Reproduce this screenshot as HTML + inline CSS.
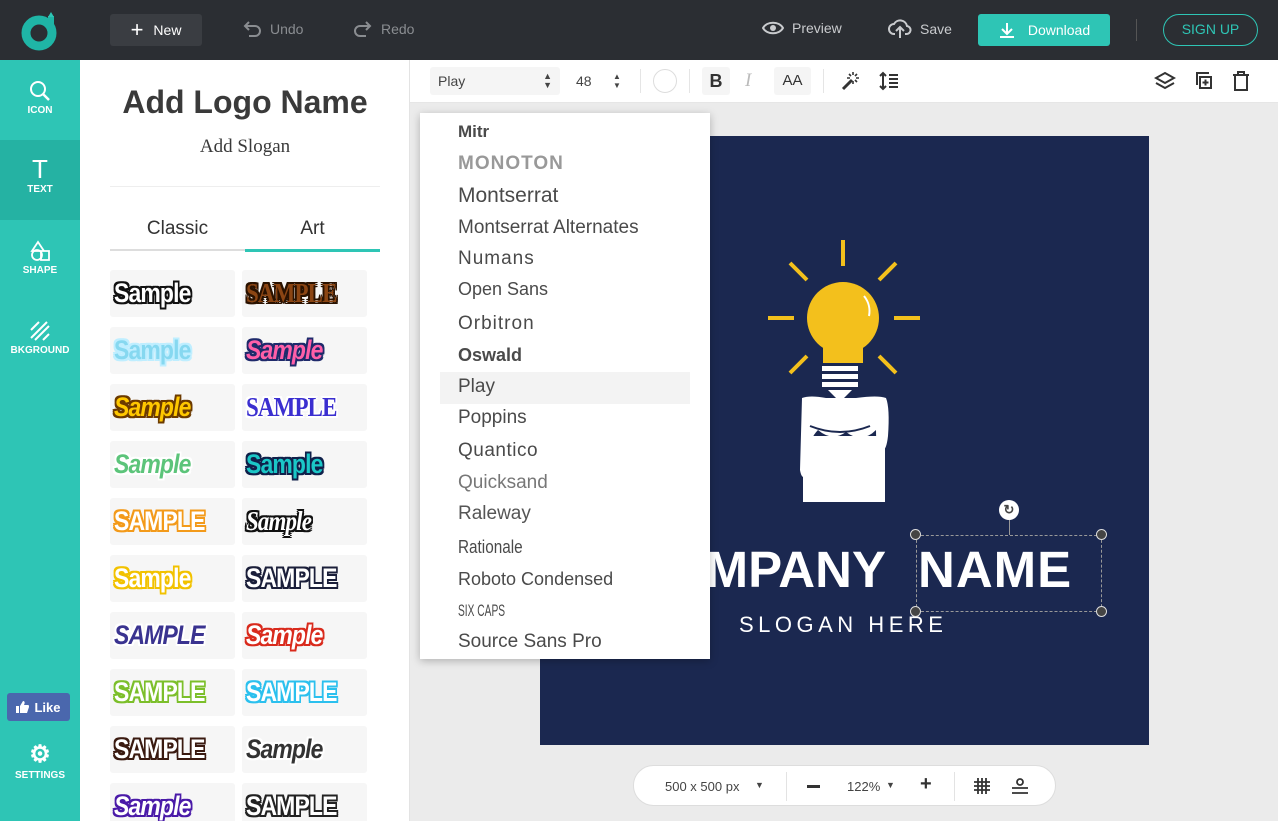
<!DOCTYPE html>
<html><head><meta charset="utf-8"><style>
*{box-sizing:border-box;margin:0;padding:0}
html,body{width:1278px;height:821px;overflow:hidden}
body{font-family:"Liberation Sans",sans-serif;background:#ebebeb;position:relative}
.abs{position:absolute}
.top{left:0;top:0;width:1278px;height:60px;background:#2b2e33}
.tb{color:#8a8d91;font-size:14px;display:flex;align-items:center;gap:8px}
.side{left:0;top:60px;width:80px;height:761px;background:#2ec5b5}
.si{position:absolute;left:0;width:80px;height:80px;color:#fff;font-size:10px;font-weight:bold;text-align:center}
.panel{left:80px;top:60px;width:330px;height:761px;background:#fff;border-right:1px solid #e3e3e3}
.tile{position:absolute;width:125px;height:47px;background:#f6f6f6;border-radius:3px;overflow:hidden;display:flex;align-items:center;font-size:27px;font-weight:bold;white-space:nowrap}
.tool{left:410px;top:60px;width:868px;height:43px;background:#fff;border-bottom:1px solid #e6e6e6}
.dd{left:420px;top:113px;width:290px;height:546px;background:#fff;box-shadow:0 2px 8px rgba(0,0,0,.25);overflow:hidden}
.fi{position:absolute;left:38px;font-size:19px;color:#4a4a4a;white-space:nowrap}
.h{position:absolute;width:11px;height:11px;border-radius:50%;background:#444;border:1.5px solid #ddd}
</style></head><body>
<div class="abs top"></div>
<svg class="abs" style="left:20px;top:10px" width="42" height="42" viewBox="0 0 42 42"><circle cx="19" cy="23" r="13" fill="none" stroke="#1fb5a6" stroke-width="9"/><path d="M28 6 L34 6 L34 25 L28 25Z" fill="#1fb5a6"/><path d="M31 2 l3 5 h-6z" fill="#2ec5b5"/></svg>
<div class="abs" style="left:110px;top:14px;width:92px;height:32px;background:#3a3d42;border-radius:3px;color:#fff;font-size:14px;display:flex;align-items:center;justify-content:center;gap:10px"><span style="font-size:22px;font-weight:300">+</span>New</div>
<div class="abs tb" style="left:242px;top:20px"><svg width="20" height="18"><path d="M4 6h9a5 5 0 0 1 0 10H7M7 2L3 6l4 4" fill="none" stroke="#8a8d91" stroke-width="2"/></svg>Undo</div>
<div class="abs tb" style="left:353px;top:20px"><svg width="20" height="18"><path d="M16 6H7a5 5 0 0 0 0 10h6M13 2l4 4-4 4" fill="none" stroke="#8a8d91" stroke-width="2"/></svg>Redo</div>
<div class="abs tb" style="left:762px;top:20px;color:#c9cbce"><svg width="22" height="16"><path d="M1 8C5 1 17 1 21 8C17 15 5 15 1 8Z" fill="none" stroke="#c9cbce" stroke-width="2"/><circle cx="11" cy="8" r="3" fill="#c9cbce"/></svg>Preview</div>
<div class="abs tb" style="left:888px;top:18px;color:#c9cbce"><svg width="24" height="22"><path d="M7 16H6a5 5 0 0 1 0-10a7 7 0 0 1 13 2a4 4 0 0 1-1 8h-1M12 20V10M8 13l4-4 4 4" fill="none" stroke="#c9cbce" stroke-width="2"/></svg>Save</div>
<div class="abs" style="left:978px;top:14px;width:132px;height:32px;background:#2ec5b5;border-radius:3px;color:#fff;font-size:14px;display:flex;align-items:center;justify-content:center;gap:12px"><svg width="18" height="18"><path d="M9 2v11M4 8l5 5 5-5M2 16h14" fill="none" stroke="#fff" stroke-width="2"/></svg>Download</div>
<div class="abs" style="left:1136px;top:19px;width:1px;height:22px;background:#555"></div>
<div class="abs" style="left:1163px;top:14px;width:95px;height:32px;border:1.5px solid #2ec5b5;border-radius:16px;color:#2ec5b5;font-size:14px;text-align:center;line-height:29px">SIGN UP</div>

<div class="abs side"></div>
<div class="si" style="top:60px"><svg style="margin-top:20px" width="22" height="22"><circle cx="9" cy="9" r="7" fill="none" stroke="#fff" stroke-width="2"/><path d="M14 14l6 6" stroke="#fff" stroke-width="2.5"/></svg><div>ICON</div></div>
<div class="si" style="top:140px;background:#25b2a3"><div style="font-size:26px;font-weight:300;margin-top:16px;line-height:26px">T</div><div style="margin-top:2px">TEXT</div></div>
<div class="si" style="top:220px"><svg style="margin-top:20px" width="22" height="22"><path d="M9 2l6 9H3z M12 11h8v9h-8z" fill="none" stroke="#fff" stroke-width="1.8"/><circle cx="8" cy="15" r="5" fill="none" stroke="#fff" stroke-width="1.8"/></svg><div>SHAPE</div></div>
<div class="si" style="top:300px"><svg style="margin-top:20px" width="22" height="22"><path d="M2 10L10 2M2 18L18 2M6 20L20 6M14 20L20 14" stroke="#fff" stroke-width="2"/></svg><div>BKGROUND</div></div>
<div class="abs" style="left:7px;top:693px;width:63px;height:28px;background:#4a67ad;border-radius:3px;color:#fff;font-size:13px;font-weight:bold;display:flex;align-items:center;justify-content:center;gap:5px"><svg width="13" height="12"><path d="M0 5h3v7H0zM4 5l3-5c2 0 2 2 1 4h4c1 0 1 1 1 2l-2 6H4z" fill="#fff"/></svg>Like</div>
<div class="si" style="top:740px"><div style="font-size:24px;line-height:30px">⚙</div><div>SETTINGS</div></div>

<div class="abs panel"></div>
<div class="abs" style="left:80px;top:84px;width:330px;text-align:center;font-size:32px;font-weight:bold;color:#3a3a3a">Add Logo Name</div>
<div class="abs" style="left:80px;top:136px;width:330px;text-align:center;font-size:19px;font-family:'Liberation Serif',serif;color:#3a3a3a">Add Slogan</div>
<div class="abs" style="left:110px;top:186px;width:270px;height:1px;background:#eee"></div>
<div class="abs" style="left:110px;top:218px;width:135px;text-align:center;font-size:19px;color:#333">Classic</div>
<div class="abs" style="left:245px;top:218px;width:135px;text-align:center;font-size:19px;color:#333">Art</div>
<div class="abs" style="left:110px;top:249px;width:135px;height:2px;background:#ddd"></div>
<div class="abs" style="left:245px;top:249px;width:135px;height:3px;background:#2ec5b5"></div>

<div class="abs" style="left:0;top:0;width:409px;height:821px;overflow:hidden" id="tiles"></div>
<script>
var T=[
["Sample","#fff","#111",0,0],["SAMPLE","#8b4513","#2a1200",0,1],
["Sample","#86d8f0","#bfeeff",0,0],["Sample","#ff5fa8","#1f2a6b",1,0],
["Sample","#ffc800","#6b3a00",1,0],["SAMPLE","#3b2fd0","#fff",0,1],
["Sample","#5cc47a","#fff",1,0],["Sample","#1bc7c7","#10204a",0,0],
["SAMPLE","#fff","#f39a1a",0,0],["Sample","#fff","#111",1,1],
["Sample","#fff","#f2c200",0,0],["SAMPLE","#fff","#1b1f3a",0,0],
["SAMPLE","#3a3390","#fff",1,0],["Sample","#fff","#d92a1c",1,0],
["SAMPLE","#fff","#7cbf2a",0,0],["SAMPLE","#fff","#2bc0ee",0,0],
["SAMPLE","#fff","#3a1a10",0,0],["Sample","#333","#fff",1,0],
["Sample","#fff","#4a1aa8",1,0],["SAMPLE","#fff","#222",0,0]];
var h="";
T.forEach(function(t,i){var r=Math.floor(i/2),c=i%2;var o=t[2];
var sh=["-2px -2px","2px -2px","-2px 2px","2px 2px","0 -2px","0 2px","-2px 0","2px 0"].map(function(p){return p+" 0 "+o}).join(",");
h+='<div class="tile" style="left:'+(c?242:110)+'px;top:'+(270+r*57)+'px"><span style="margin-left:4px;color:'+t[1]+';text-shadow:'+sh+';font-style:'+(t[3]?'italic':'normal')+';font-family:'+(t[4]?"'Liberation Serif',serif":"'Liberation Sans',sans-serif")+';letter-spacing:-1px;transform:scaleX(.85);transform-origin:left">'+t[0]+'</span></div>';});
document.getElementById("tiles").innerHTML=h;
</script>

<div class="abs tool"></div>
<div class="abs" style="left:430px;top:67px;width:130px;height:28px;background:#f5f5f5;border-radius:3px;font-size:14px;color:#444;padding:6px 8px">Play<span style="position:absolute;right:8px;top:5px;font-size:9px;line-height:9px">▲<br>▼</span></div>
<div class="abs" style="left:576px;top:73px;font-size:14px;color:#444">48</div>
<div class="abs" style="left:613px;top:72px;font-size:8px;line-height:9px;color:#444">▲<br>▼</div>
<div class="abs" style="left:640px;top:69px;width:1px;height:24px;background:#e5e5e5"></div>
<div class="abs" style="left:653px;top:69px;width:24px;height:24px;border-radius:50%;border:1.5px solid #ddd"></div>
<div class="abs" style="left:689px;top:69px;width:1px;height:24px;background:#e5e5e5"></div>
<div class="abs" style="left:702px;top:67px;width:28px;height:28px;background:#f5f5f5;border-radius:3px;font-size:18px;font-weight:bold;color:#333;text-align:center;line-height:28px">B</div>
<div class="abs" style="left:745px;top:70px;font-size:19px;font-style:italic;color:#bbb;font-family:'Liberation Serif',serif">I</div>
<div class="abs" style="left:774px;top:67px;width:37px;height:28px;background:#f5f5f5;border-radius:3px;font-size:15px;color:#333;text-align:center;line-height:28px">AA</div>
<div class="abs" style="left:823px;top:69px;width:1px;height:24px;background:#e5e5e5"></div>
<svg class="abs" style="left:841px;top:71px" width="20" height="20"><path d="M2 18L11 9" stroke="#333" stroke-width="3"/><path d="M12 1v3M12 10v3M6 7h3M15 7h3M8 3l2 2M16 3l-2 2M16 11l-2-2" stroke="#333" stroke-width="1.6"/></svg>
<svg class="abs" style="left:879px;top:71px" width="20" height="20"><path d="M4 2v16M1 5l3-3 3 3M1 15l3 3 3-3M10 4h9M10 8h9M10 12h9M10 16h9" fill="none" stroke="#333" stroke-width="2"/></svg>
<svg class="abs" style="left:1154px;top:71px" width="22" height="20"><path d="M11 2l9 5-9 5-9-5z" fill="none" stroke="#333" stroke-width="2"/><path d="M2 12l9 5 9-5" fill="none" stroke="#333" stroke-width="2"/></svg>
<svg class="abs" style="left:1194px;top:71px" width="20" height="20"><path d="M3 14V2h12" fill="none" stroke="#333" stroke-width="2"/><rect x="6" y="6" width="11" height="11" fill="none" stroke="#333" stroke-width="2"/><path d="M11.5 8.5v6M8.5 11.5h6" stroke="#333" stroke-width="2"/></svg>
<svg class="abs" style="left:1232px;top:71px" width="18" height="20"><path d="M1 4h16M6 4V1h6v3M3 4v15h12V4" fill="none" stroke="#333" stroke-width="2"/></svg>

<div class="abs" style="left:540px;top:136px;width:609px;height:609px;background:#1b2850;overflow:hidden">
<svg class="abs" style="left:0;top:0" width="609" height="609">
<g stroke="#f3c01c" stroke-width="4"><path d="M303 104v26M250 127l17 17M356 127l-17 17M228 182h26M354 182h26M250 237l17-17M356 237l-17-17"/></g>
<circle cx="303" cy="182" r="36" fill="#f3c01c"/><path d="M283 205h40v22h-40z" fill="#f3c01c"/>
<path d="M324 160a24 24 0 0 1 5 20" stroke="#fff" stroke-width="2" fill="none"/>
<g fill="#fff"><rect x="282" y="230" width="36" height="5"/><rect x="282" y="238" width="36" height="5"/><rect x="282" y="246" width="36" height="5"/><path d="M288 254h24l-12 12z"/>
<path d="M262 262q8-3 24 0 h30 q22-3 30 0 q4 10 2 38 q-2 18-8 14 q-4-2-4-20 q-14 14-30 2 q-14 10-28-2 q-8 8-10 22 v22 q-6 8-8-4z"/>
<rect x="263" y="300" width="82" height="66"/></g>
<path d="M270 290q30 12 60 0" stroke="#1b2850" stroke-width="2" fill="none"/>
</svg>
<div class="abs" style="right:263px;top:404px;font-size:51px;font-weight:bold;color:#fff;white-space:pre">COMPANY</div>
<div class="abs" style="left:378px;top:404px;font-size:51px;font-weight:bold;color:#fff;letter-spacing:1px">NAME</div>
<div class="abs" style="left:199px;top:476px;font-size:22px;color:#fff;letter-spacing:4.5px">SLOGAN HERE</div>
</div>
<div class="abs" style="left:916px;top:535px;width:186px;height:77px;border:1px dashed #999"></div>
<div class="abs" style="left:1009px;top:518px;width:1px;height:17px;background:#999"></div>
<div class="h" style="left:910px;top:529px"></div><div class="h" style="left:1096px;top:529px"></div><div class="h" style="left:910px;top:606px"></div><div class="h" style="left:1096px;top:606px"></div>
<div class="abs" style="left:999px;top:500px;width:20px;height:20px;border-radius:50%;background:#fff;color:#444;font-size:13px;font-weight:bold;text-align:center;line-height:20px">↻</div>

<div class="abs dd">
<div class="fi" style="top:9px;font-weight:bold;font-size:17px">Mitr</div>
<div class="fi" style="top:40px;color:#999;font-weight:bold;letter-spacing:1px">MONOTON</div>
<div class="fi" style="top:71px;font-size:21px">Montserrat</div>
<div class="fi" style="top:104px">Montserrat Alternates</div>
<div class="fi" style="top:135px;letter-spacing:1px">Numans</div>
<div class="fi" style="top:166px;font-size:18px">Open Sans</div>
<div class="fi" style="top:200px;letter-spacing:1px">Orbitron</div>
<div class="fi" style="top:232px;font-weight:bold;font-size:18px">Oswald</div>
<div class="abs" style="left:20px;top:259px;width:250px;height:32px;background:#f3f3f3"></div>
<div class="fi" style="top:263px">Play</div>
<div class="fi" style="top:294px">Poppins</div>
<div class="fi" style="top:327px;letter-spacing:.5px">Quantico</div>
<div class="fi" style="top:359px;color:#777">Quicksand</div>
<div class="fi" style="top:390px;color:#555">Raleway</div>
<div class="fi" style="top:424px;font-size:18px;transform:scaleX(.85);transform-origin:left">Rationale</div>
<div class="fi" style="top:456px;font-size:18px">Roboto Condensed</div>
<div class="fi" style="top:488px;font-size:17px;transform:scaleX(.6);transform-origin:left">SIX CAPS</div>
<div class="fi" style="top:518px">Source Sans Pro</div>
</div>

<div class="abs" style="left:633px;top:765px;width:423px;height:41px;background:#fff;border:1px solid #ddd;border-radius:21px"></div>
<div class="abs" style="left:665px;top:779px;font-size:13px;color:#444">500 x 500 px</div>
<div class="abs" style="left:755px;top:780px;font-size:9px;color:#444">▼</div>
<div class="abs" style="left:786px;top:772px;width:1px;height:29px;background:#e3e3e3"></div>
<div class="abs" style="left:807px;top:785px;width:13px;height:3px;background:#333"></div>
<div class="abs" style="left:847px;top:779px;font-size:13px;color:#444">122%</div>
<div class="abs" style="left:886px;top:780px;font-size:9px;color:#444">▼</div>
<div class="abs" style="left:920px;top:773px;font-size:20px;font-weight:bold;color:#333">+</div>
<div class="abs" style="left:954px;top:772px;width:1px;height:29px;background:#e3e3e3"></div>
<svg class="abs" style="left:974px;top:778px" width="16" height="16"><path d="M4 0v16M8 0v16M12 0v16M0 4h16M0 8h16M0 12h16" stroke="#333" stroke-width="1.8"/></svg>
<svg class="abs" style="left:1011px;top:777px" width="18" height="18"><circle cx="9" cy="5" r="3" fill="none" stroke="#333" stroke-width="1.8"/><path d="M1 11h16M1 16h16" stroke="#333" stroke-width="1.8"/></svg>
</body></html>
